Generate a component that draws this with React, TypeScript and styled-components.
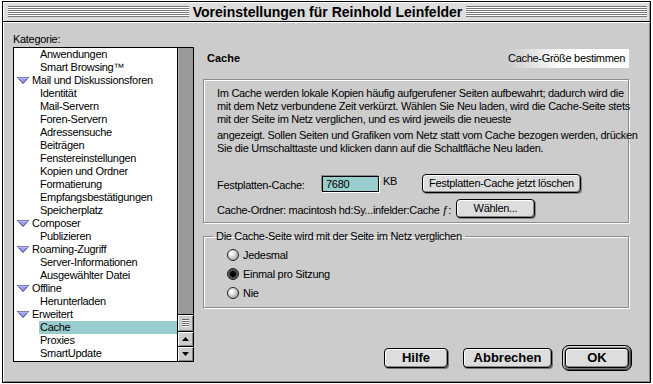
import React from "react";
import styled, { createGlobalStyle } from "styled-components";

const UI_FONT = `"Liberation Sans", Arial, sans-serif`;
const BOLD_FONT = `"Liberation Sans", Arial, sans-serif`;

const GlobalStyle = createGlobalStyle`
  html, body {
    margin: 0;
    padding: 0;
    background: #fff;
  }
  body {
    width: 653px;
    height: 384px;
    overflow: hidden;
    font-family: ${UI_FONT};
    font-size: 11px;
    letter-spacing: -0.3px;
    color: #000;
  }
`;

type Item = { label: string; child?: boolean; selected?: boolean };

const items: Item[] = [
  { label: "Anwendungen", child: true },
  { label: "Smart Browsing™", child: true },
  { label: "Mail und Diskussionsforen" },
  { label: "Identität", child: true },
  { label: "Mail-Servern", child: true },
  { label: "Foren-Servern", child: true },
  { label: "Adressensuche", child: true },
  { label: "Beiträgen", child: true },
  { label: "Fenstereinstellungen", child: true },
  { label: "Kopien und Ordner", child: true },
  { label: "Formatierung", child: true },
  { label: "Empfangsbestätigungen", child: true },
  { label: "Speicherplatz", child: true },
  { label: "Composer" },
  { label: "Publizieren", child: true },
  { label: "Roaming-Zugriff" },
  { label: "Server-Informationen", child: true },
  { label: "Ausgewählter Datei", child: true },
  { label: "Offline" },
  { label: "Herunterladen", child: true },
  { label: "Erweitert" },
  { label: "Cache", child: true, selected: true },
  { label: "Proxies", child: true },
  { label: "SmartUpdate", child: true },
];

const Disclosure = () => (
  <TriangleIcon width="12" height="7" viewBox="0 0 12 7">
    <polygon points="0.5,0.5 11.5,0.5 6,6.5" fill="#9c9cff" stroke="#33336a" strokeWidth="1" />
    <line x1="1" y1="1" x2="11" y2="1" stroke="#cfcfff" strokeWidth="1" />
  </TriangleIcon>
);

const Arrow = ({ up }: { up?: boolean }) => (
  <svg width="7" height="4" viewBox="0 0 7 4">
    <polygon points={up ? "3.5,0 7,4 0,4" : "0,0 7,0 3.5,4"} fill="#000" />
  </svg>
);

const App = (): JSX.Element => {
  return (
    <>
      <GlobalStyle />
      <Window>
        <TitleBar>
          <Stripes />
          <Title>Voreinstellungen für Reinhold Leinfelder</Title>
          <Stripes />
        </TitleBar>
        <Content>
          <LeftColumn>
            <FieldLabel>Kategorie:</FieldLabel>
            <ListBox>
              <ListItems>
                {items.map((item) => (
                  <Row key={item.label}>
                    {!item.child && <Disclosure />}
                    <ItemText $child={item.child} $selected={item.selected}>
                      {item.label}
                    </ItemText>
                  </Row>
                ))}
              </ListItems>
              <ScrollBar>
                <Track />
                <Thumb />
                <ArrowButton>
                  <Arrow up />
                </ArrowButton>
                <ArrowButton>
                  <Arrow />
                </ArrowButton>
              </ScrollBar>
            </ListBox>
          </LeftColumn>

          <RightColumn>
            <Header>
              <Heading>Cache</Heading>
              <SectionTag>Cache-Größe bestimmen</SectionTag>
            </Header>

            <InfoBox>
              <Paragraph>
                Im Cache werden lokale Kopien häufig aufgerufener Seiten aufbewahrt; dadurch wird die
                <br />
                mit dem Netz verbundene Zeit verkürzt. Wählen Sie Neu laden, wird die Cache-Seite stets
                <br />
                mit der Seite im Netz verglichen, und es wird jeweils die neueste
              </Paragraph>
              <Paragraph $gap>
                angezeigt. Sollen Seiten und Grafiken vom Netz statt vom Cache bezogen werden, drücken
                <br />
                Sie die Umschalttaste und klicken dann auf die Schaltfläche Neu laden.
              </Paragraph>

              <FormRow $top={19}>
                <RowLabel $width={105}>Festplatten-Cache:</RowLabel>
                <NumberField>7680</NumberField>
                <Unit>KB</Unit>
                <PushButton $width={159}>Festplatten-Cache jetzt löschen</PushButton>
              </FormRow>
              <FormRow $top={6}>
                <RowLabel $width={239}>Cache-Ordner: macintosh hd:Sy...infelder:Cache ƒ:</RowLabel>
                <PushButton $width={79}>Wählen...</PushButton>
              </FormRow>
            </InfoBox>

            <GroupBox>
              <Legend>Die Cache-Seite wird mit der Seite im Netz verglichen</Legend>
              <RadioList>
                <RadioRow>
                  <Radio />
                  Jedesmal
                </RadioRow>
                <RadioRow>
                  <Radio $checked />
                  Einmal pro Sitzung
                </RadioRow>
                <RadioRow>
                  <Radio />
                  Nie
                </RadioRow>
              </RadioList>
            </GroupBox>

            <ButtonBar>
              <DialogButton $width={64}>Hilfe</DialogButton>
              <DialogButton $width={89}>Abbrechen</DialogButton>
              <DefaultRing>
                <DialogButton $width={64}>OK</DialogButton>
              </DefaultRing>
            </ButtonBar>
          </RightColumn>
        </Content>
      </Window>
    </>
  );
};

export default App;

const Window = styled.div`
  margin: 1px 0 0 2px;
  width: 649px;
  height: 382px;
  box-sizing: border-box;
  border: 1px solid #000;
  display: flex;
  flex-direction: column;
  background: #cccccc;
`;

const TitleBar = styled.div`
  display: flex;
  align-items: center;
  height: 20px;
  box-sizing: border-box;
  padding: 0 3px 0 5px;
  border-bottom: 1px solid #000;
  background: #dddddd;
  box-shadow: inset 1px 1px 0 #fff, inset -1px 0 0 #999;
`;

const Stripes = styled.div`
  flex: 1;
  height: 11px;
  background: repeating-linear-gradient(to bottom, #777 0 1px, #fff 1px 2px);
`;

const Title = styled.div`
  padding: 0 4px;
  font-family: ${BOLD_FONT};
  font-weight: bold;
  font-size: 14px;
  letter-spacing: 0;
  line-height: 18px;
  white-space: nowrap;
`;

const Content = styled.div`
  flex: 1;
  display: grid;
  grid-template-columns: 181px minmax(0, 1fr);
  column-gap: 9px;
  padding: 10px 21px 0 10px;
  box-shadow: inset 1px 1px 0 #fff, inset -1px -1px 0 #888;
`;

const LeftColumn = styled.div`
  display: flex;
  flex-direction: column;
`;

const FieldLabel = styled.div`
  height: 14px;
  line-height: 14px;
  margin-bottom: 1px;
`;

const ListBox = styled.div`
  display: flex;
  height: 315px;
  box-sizing: border-box;
  border: 1px solid #000;
  background: #fff;
`;

const ListItems = styled.div`
  flex: 1;
  overflow: hidden;
`;

const Row = styled.div`
  display: flex;
  align-items: center;
  height: 13px;
  line-height: 13px;
  white-space: nowrap;
`;

const TriangleIcon = styled.svg`
  flex: 0 0 12px;
  margin: 0 2px 0 3px;
`;

const ItemText = styled.span<{ $child?: boolean; $selected?: boolean }>`
  flex: 1;
  margin-left: ${({ $child }) => ($child ? "25px" : "0")};
  padding-left: 1px;
  background: ${({ $selected }) => ($selected ? "#99cccc" : "transparent")};
`;

const ScrollBar = styled.div`
  display: flex;
  flex-direction: column;
  width: 15px;
  border-left: 1px solid #000;
`;

const Track = styled.div`
  flex: 1;
  background: #999999;
  box-shadow: inset 1px 0 0 #b3b3b3;
`;

const Thumb = styled.div`
  position: relative;
  height: 17px;
  box-sizing: border-box;
  border-top: 1px solid #000;
  background: #cccccc;
  box-shadow: inset 1px 1px 0 #fff, inset -1px -1px 0 #888;

  &::after {
    content: "";
    position: absolute;
    left: 4px;
    right: 4px;
    top: 4px;
    height: 8px;
    background: repeating-linear-gradient(to bottom, #666 0 1px, #fff 1px 2px);
  }
`;

const ArrowButton = styled.div`
  height: 15px;
  box-sizing: border-box;
  border-top: 1px solid #000;
  display: flex;
  align-items: center;
  justify-content: center;
  background: #cccccc;
  box-shadow: inset 1px 1px 0 #fff, inset -1px -1px 0 #888;
`;

const RightColumn = styled.div`
  display: flex;
  flex-direction: column;
  min-width: 0;
`;

const Header = styled.div`
  display: flex;
  align-items: center;
  justify-content: space-between;
  margin-top: 16px;
  height: 20px;
`;

const Heading = styled.div`
  padding-left: 4px;
  font-family: ${BOLD_FONT};
  font-weight: bold;
  font-size: 11px;
  letter-spacing: 0;
`;

const SectionTag = styled.div`
  width: 121px;
  height: 19px;
  box-sizing: border-box;
  padding-right: 10px;
  line-height: 19px;
  text-align: right;
  white-space: nowrap;
  background: linear-gradient(to right, #cccccc 0%, #e8e8e8 25%, #fff 45%);
`;

const InfoBox = styled.div`
  margin-top: 11px;
  height: 144px;
  box-sizing: border-box;
  padding: 7px 13px 0;
  border: 1px solid #8c8c8c;
  box-shadow: 1px 1px 0 #fff, inset 1px 1px 0 #fff;
`;

const Paragraph = styled.p<{ $gap?: boolean }>`
  margin: ${({ $gap }) => ($gap ? "3px" : "0")} 0 0;
  line-height: 13px;
  white-space: nowrap;
`;

const FormRow = styled.div<{ $top: number }>`
  display: flex;
  align-items: center;
  height: 19px;
  margin-top: ${({ $top }) => $top}px;
  white-space: nowrap;
`;

const RowLabel = styled.span<{ $width: number }>`
  width: ${({ $width }) => $width}px;
  padding-top: 3px;
`;

const NumberField = styled.div`
  width: 57px;
  height: 16px;
  box-sizing: border-box;
  padding-left: 3px;
  line-height: 14px;
  border: 1px solid #000;
  background: #99cccc;
  box-shadow: 1px 1px 0 #fff, -1px -1px 0 #888;
`;

const Unit = styled.span`
  align-self: flex-start;
  width: 43px;
  box-sizing: border-box;
  padding-left: 4px;
  line-height: 14px;
`;

const PushButton = styled.div<{ $width: number }>`
  width: ${({ $width }) => $width}px;
  height: 19px;
  box-sizing: border-box;
  border: 1px solid #000;
  border-radius: 4px;
  background: #dddddd;
  box-shadow: inset 1px 1px 0 #fff, inset -1px -1px 0 #888, 1px 1px 0 #888;
  text-align: center;
  line-height: 16px;
`;

const GroupBox = styled.fieldset`
  margin: 6px 0 0;
  padding: 0;
  min-width: 0;
  border: 1px solid #8c8c8c;
  box-shadow: 1px 1px 0 #fff, inset 1px 1px 0 #fff;
`;

const Legend = styled.legend`
  margin-left: 9px;
  padding: 0 3px;
  line-height: 14px;
  white-space: nowrap;
`;

const RadioList = styled.div`
  padding: 2px 0 5px 23px;
`;

const RadioRow = styled.div`
  display: flex;
  align-items: center;
  gap: 4px;
  height: 19px;
`;

const Radio = styled.span<{ $checked?: boolean }>`
  width: 12px;
  height: 12px;
  box-sizing: border-box;
  border-radius: 50%;
  border: 1px solid #222;
  background: ${({ $checked }) =>
    $checked
      ? "radial-gradient(circle at 50% 50%, #000 0 2.6px, #444 3.2px, #777 100%)"
      : "radial-gradient(circle at 35% 35%, #fff 0 1.5px, #e0e0e0 3px, #8a8a8a 100%)"};
`;

const ButtonBar = styled.div`
  display: flex;
  align-items: center;
  justify-content: flex-end;
  gap: 10px;
  margin: 37px -3px 0 0;
  letter-spacing: 0;

  & > :first-child {
    margin-right: 5px;
  }
`;

const DialogButton = styled.div<{ $width: number }>`
  width: ${({ $width }) => $width}px;
  height: 20px;
  box-sizing: border-box;
  border: 1px solid #000;
  border-radius: 4px;
  background: #dddddd;
  box-shadow: inset 1px 1px 0 #fff, inset -1px -1px 0 #888, 1px 1px 0 #777;
  font-family: ${BOLD_FONT};
  font-weight: bold;
  font-size: 13px;
  line-height: 18px;
  text-align: center;
`;

const DefaultRing = styled.div`
  padding: 2px;
  border: 1px solid #000;
  border-radius: 7px;
  background: #8a8a8a;
  box-shadow: inset 1px 1px 0 #ddd, inset -1px -1px 0 #444;
`;
